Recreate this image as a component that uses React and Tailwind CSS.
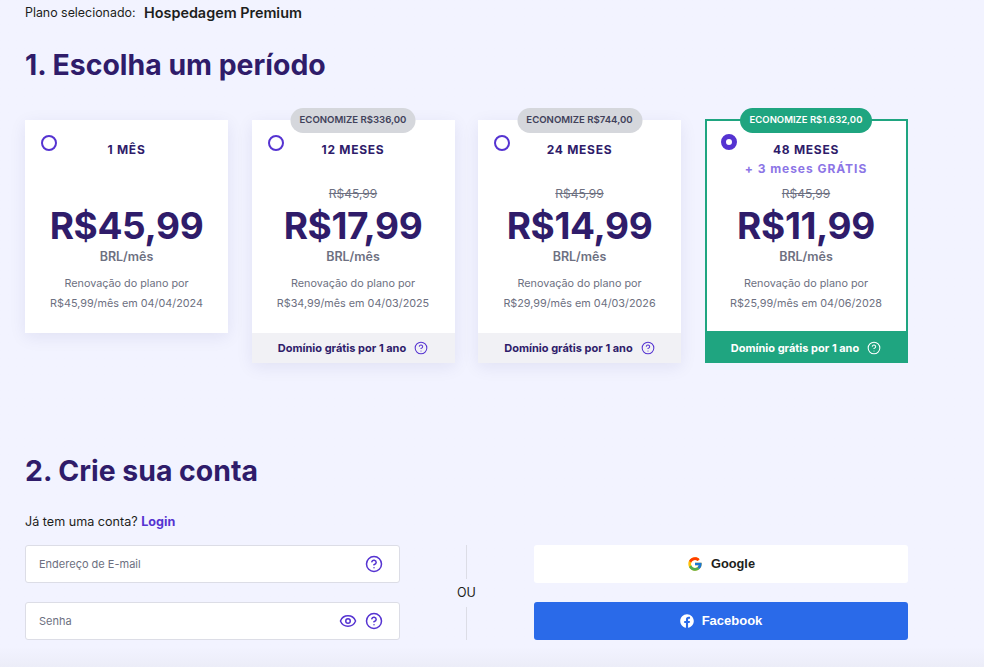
import React from "react";
import { CircleHelp, Eye } from "lucide-react";
import { FaFacebook } from "react-icons/fa";
import { FcGoogle } from "react-icons/fc";

const plans = [
  { title: "1 MÊS", price: "R$45,99", renew: "R$45,99/mês em 04/04/2024" },
  { title: "12 MESES", badge: "ECONOMIZE R$336,00", old: "R$45,99", price: "R$17,99", renew: "R$34,99/mês em 04/03/2025", domain: true },
  { title: "24 MESES", badge: "ECONOMIZE R$744,00", old: "R$45,99", price: "R$14,99", renew: "R$29,99/mês em 04/03/2026", domain: true },
  { title: "48 MESES", extra: "+ 3 meses GRÁTIS", badge: "ECONOMIZE R$1.632,00", old: "R$45,99", price: "R$11,99", renew: "R$25,99/mês em 04/06/2028", domain: true, selected: true },
];

function Card({ p }) {
  return (
    <div className={p.selected
      ? "relative w-[203px] h-[244px] bg-white border-2 border-[#1fa580] flex flex-col -mt-px"
      : p.domain
        ? "relative w-[203px] h-[243px] bg-white shadow-[0_4px_16px_rgba(29,30,120,0.08)] flex flex-col"
        : "relative w-[203px] h-[213px] bg-white shadow-[0_4px_16px_rgba(29,30,120,0.08)] flex flex-col"}>
      {p.badge && (
        <div className={p.selected
          ? "absolute -top-[13px] left-1/2 -translate-x-1/2 h-[25px] w-[132px] justify-center rounded-full bg-[#1fa580] text-white text-[9.5px] font-semibold flex items-center whitespace-nowrap"
          : "absolute -top-[12px] left-1/2 -translate-x-1/2 h-[25px] w-[125px] justify-center rounded-full bg-[#d5d7dc] text-[#41415a] text-[9.6px] font-semibold flex items-center whitespace-nowrap"}>
          {p.badge}
        </div>
      )}
      <div className={p.selected
        ? "absolute left-[14px] top-[13px] w-4 h-4 rounded-full border-[5px] border-[#5533d1]"
        : "absolute left-[16px] top-[15px] w-4 h-4 rounded-full border-2 border-[#5533d1]"} />
      <div className={p.selected ? "flex-1 flex flex-col items-center pt-[18px]" : "flex-1 flex flex-col items-center pt-[19px]"}>
        <div className="h-5 leading-[22px] text-[12px] font-bold tracking-[0.06em] text-[#2f1c6a]">{p.title}</div>
        <div className="h-[19px] leading-[19px] text-[12px] font-bold tracking-[0.08em] text-[#8c75e6]">{p.extra}</div>
        <div className="mt-[6px] h-5 leading-5 text-[12px] text-[#6d7081] line-through">{p.old}</div>
        <div className="h-[44px] leading-[44px] text-[37px] font-bold tracking-[-0.01em] text-[#2f1c6a] whitespace-nowrap">{p.price}</div>
        <div className="-mt-px h-5 leading-5 text-[12.5px] font-semibold text-[#6d7081]">BRL/mês</div>
        <div className="mt-[7px] leading-5 text-[10.8px] text-[#6d7081] text-center whitespace-nowrap">
          Renovação do plano por<br />{p.renew}
        </div>
      </div>
      {p.domain && (
        <div className={p.selected
          ? "h-[30px] pt-1 bg-[#1fa580] text-white flex items-center justify-center gap-2 text-[11px] font-bold"
          : "h-[30px] bg-[#f1f1f5] text-[#2f1c6a] flex items-center justify-center gap-2 text-[11px] font-bold"}>
          <span>Domínio grátis por 1 ano</span>
          <CircleHelp className={p.selected ? "w-[14px] h-[14px] text-white" : "w-[14px] h-[14px] text-[#5533d1]"} strokeWidth={1.75} />
        </div>
      )}
    </div>
  );
}

function Field({ label, eye }) {
  return (
    <div className="h-[38px] bg-white border border-[#dcdde6] rounded-[3px] flex items-center pl-[13px] pr-4">
      <span className="flex-1 pt-px text-[11px] text-[#6d7081]">{label}</span>
      <div className="flex items-center gap-2">
        {eye && <Eye className="w-[18px] h-[18px] text-[#5533d1]" strokeWidth={2} />}
        <CircleHelp className="w-[18px] h-[18px] text-[#5533d1]" strokeWidth={2} />
      </div>
    </div>
  );
}

export default function App() {
  return (
    <div className="w-[984px] h-[667px] overflow-hidden bg-gradient-to-b from-[#f2f3ff] via-[#f2f3ff] via-[97%] to-[#ecedf8] font-['Inter','Liberation_Sans',sans-serif] pl-[25px]">
      <div className="flex items-center h-[26px] text-[#1d1e20]">
        <span className="text-[12.4px] w-[119px]">Plano selecionado:</span>
        <span className="text-[14.4px] font-semibold">Hospedagem Premium</span>
      </div>
      <h1 className="mt-[19px] h-10 leading-10 text-[28.4px] font-bold text-[#2f1c6a]">1. Escolha um período</h1>
      <div className="mt-[35px] flex items-start gap-[23.5px] h-[243px]">
        {plans.map((p) => <Card key={p.title} p={p} />)}
      </div>
      <h2 className="mt-[88px] h-10 leading-10 text-[28.4px] font-bold text-[#2f1c6a]">2. Crie sua conta</h2>
      <div className="mt-[21px] h-5 leading-5 text-[12.6px] text-[#1d1e20]">
        Já tem uma conta? <span className="font-bold text-[#5533d1]">Login</span>
      </div>
      <div className="mt-[13px] flex items-stretch">
        <div className="w-[375px] flex flex-col gap-[19px]">
          <Field label="Endereço de E-mail" />
          <Field label="Senha" eye />
        </div>
        <div className="w-[133px] mr-px flex flex-col items-center">
          <div className="flex-1 w-px bg-[#dcdde6]" />
          <div className="h-[28px] leading-[28px] text-[12.5px] text-[#1d1e20]">OU</div>
          <div className="flex-1 w-px bg-[#dcdde6]" />
        </div>
        <div className="w-[374px] flex flex-col gap-[19px]">
          <div className="h-[38px] bg-white rounded-[3px] flex items-center justify-center gap-2 text-[12.8px] font-semibold text-[#1d1e20] font-['Liberation_Sans',sans-serif]">
            <FcGoogle className="w-4 h-4" /> Google
          </div>
          <div className="h-[38px] bg-[#2a6ae9] rounded-[3px] flex items-center justify-center gap-2 text-[13px] font-semibold text-white font-['Liberation_Sans',sans-serif]">
            <FaFacebook className="w-[14px] h-[14px]" /> Facebook
          </div>
        </div>
      </div>
    </div>
  );
}
